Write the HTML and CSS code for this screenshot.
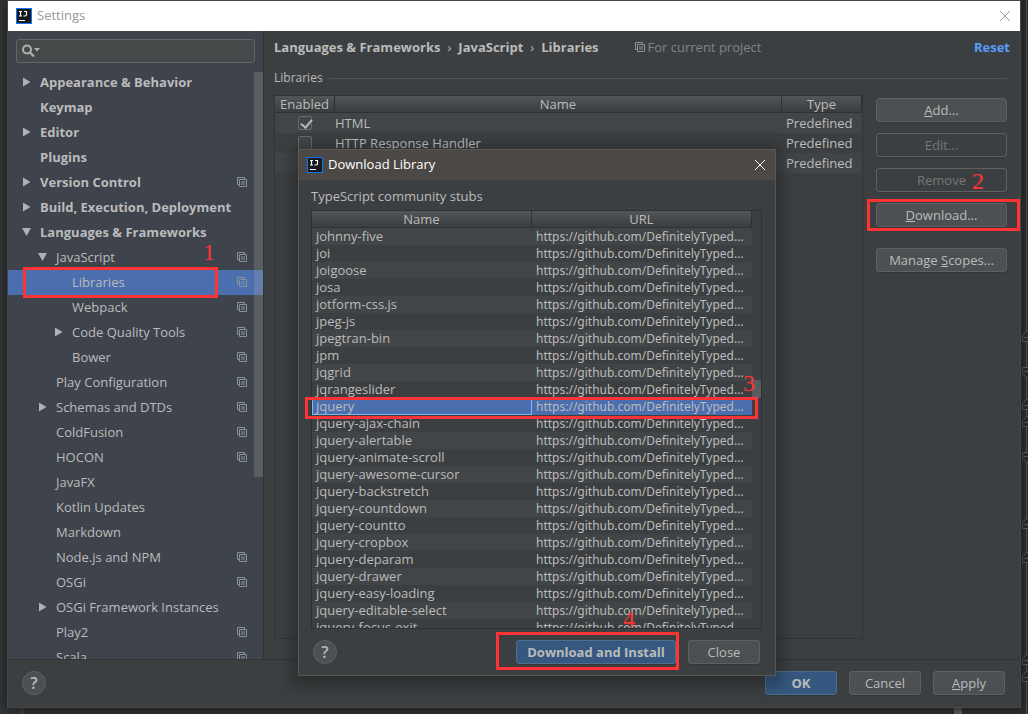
FILE: index.html
```html
<!DOCTYPE html>
<html lang="en">
<head>
<meta charset="utf-8">
<title>Settings</title>
<link rel="stylesheet" href="styles.css">
</head>
<body>
<svg class="defs" aria-hidden="true">
  <symbol id="copy" viewBox="0 0 10 10"><path d="M2 7.5H.5V.5h7V2M2.5 2.5h7v7h-7zM4 5h4M4 7h4" fill="none" stroke="currentColor"/></symbol>
  <symbol id="right" viewBox="0 0 9 10"><path d="M1 0.5 8.500 5 1 9.500z" fill="#afb1b3"/></symbol>
  <symbol id="down" viewBox="0 0 9 10"><path d="M0 1h9L4.500 9z" fill="#afb1b3"/></symbol>
  <symbol id="logo" viewBox="0 0 16 16"><path d="M0 0h16v16H0z" fill="#0f75f0"/><path d="M1 1h14v14H1z" fill="#17191c"/><path d="M3 3.500h3M4.500 3.500v4.500M3 8h3M8 3.500h2.500v3Q10.500 8 9 8H7.500M3 12.500h6" fill="none" stroke="#fff" stroke-width="1.200"/></symbol>
  <symbol id="cross" viewBox="0 0 12 12"><path d="m1 1 10 10M11 1 1 11" fill="none" stroke="currentColor"/></symbol>
</svg>
<div class="backdrop"><i class="gutter"></i><i class="thumb"></i><i class="stripe"></i>
  <svg class="folds" viewBox="0 0 6 714" fill="#2b2b2b" stroke="#606366">
    <path d="M6 331.500H4.500l-4 4v6H6M2 337.500h4"/><path d="M6 367.500H.5v6l4 4H6M2 371.500h4"/>
    <path d="M6 399.500H4.500l-4 4v6H6M2 405.500h4"/><path d="M6 416.500H4.500l-4 4v6H6M2 422.500h4"/>
    <path d="M6 452.500H.5v6l4 4H6M2 456.500h4"/><path d="M6 518.500H4.500l-4 4v6H6M2 524.500h4"/>
    <path d="M6 552.500H4.500l-4 4v6H6M2 558.500h4"/><path d="M6 654.500H4.500l-4 4v6H6M2 660.500h4"/>
    <path d="M6 671.500H4.500l-4 4v6H6M2 677.500h4"/>
  </svg>
</div>
<main class="window">
  <header class="titlebar">
    <svg class="logo"><use href="#logo"/></svg><span>Settings</span>
    <button class="close" aria-label="Close settings"><svg><use href="#cross"/></svg></button>
  </header>
  <div class="content">
    <aside class="sidebar">
      <label class="search">
        <svg viewBox="0 0 20 14"><circle cx="6" cy="5.500" r="4" fill="none" stroke="#afb1b3" stroke-width="2"/><path d="m9 8.500 4 4" stroke="#afb1b3" stroke-width="2.400"/><path d="M13 4h6l-3 3.500z" fill="#afb1b3"/></svg>
        <input type="text" aria-label="Search settings">
      </label>
      <div class="tree-view">
        <ul class="tree">
          <li class="top"><svg class="arrow"><use href="#right"/></svg>Appearance &amp; Behavior</li>
          <li class="top">Keymap</li>
          <li class="top"><svg class="arrow"><use href="#right"/></svg>Editor</li>
          <li class="top">Plugins</li>
          <li class="top"><svg class="arrow"><use href="#right"/></svg>Version Control<svg class="copy"><use href="#copy"/></svg></li>
          <li class="top"><svg class="arrow"><use href="#right"/></svg>Build, Execution, Deployment</li>
          <li class="top"><svg class="arrow"><use href="#down"/></svg>Languages &amp; Frameworks</li>
          <li class="mid"><svg class="arrow"><use href="#down"/></svg>JavaScript<svg class="copy"><use href="#copy"/></svg></li>
          <li class="deep selected">Libraries<svg class="copy"><use href="#copy"/></svg><span class="frame frame-tree"></span><span class="step step-one">1</span></li>
          <li class="deep">Webpack<svg class="copy"><use href="#copy"/></svg></li>
          <li class="deep"><svg class="arrow"><use href="#right"/></svg>Code Quality Tools<svg class="copy"><use href="#copy"/></svg></li>
          <li class="deep">Bower<svg class="copy"><use href="#copy"/></svg></li>
          <li class="mid">Play Configuration<svg class="copy"><use href="#copy"/></svg></li>
          <li class="mid"><svg class="arrow"><use href="#right"/></svg>Schemas and DTDs<svg class="copy"><use href="#copy"/></svg></li>
          <li class="mid">ColdFusion<svg class="copy"><use href="#copy"/></svg></li>
          <li class="mid">HOCON<svg class="copy"><use href="#copy"/></svg></li>
          <li class="mid">JavaFX</li>
          <li class="mid">Kotlin Updates</li>
          <li class="mid">Markdown</li>
          <li class="mid">Node.js and NPM<svg class="copy"><use href="#copy"/></svg></li>
          <li class="mid">OSGi<svg class="copy"><use href="#copy"/></svg></li>
          <li class="mid"><svg class="arrow"><use href="#right"/></svg>OSGi Framework Instances</li>
          <li class="mid">Play2<svg class="copy"><use href="#copy"/></svg></li>
          <li class="mid">Scala<svg class="copy"><use href="#copy"/></svg></li>
        </ul>
        <i class="tree-scroll"></i>
      </div>
    </aside>
    <section class="page">
      <div class="crumbs">
        <b>Languages &amp; Frameworks</b><span>›</span><b>JavaScript</b><span>›</span><b>Libraries</b>
        <span class="scope"><svg class="copy"><use href="#copy"/></svg>For current project</span>
        <a class="reset" href="#">Reset</a>
      </div>
      <h2 class="group">Libraries</h2>
      <div class="panel">
        <div class="libraries">
          <table class="grid">
            <colgroup><col class="col-enabled"><col><col class="col-type"></colgroup>
            <thead><tr><th>Enabled</th><th>Name</th><th>Type</th></tr></thead>
            <tbody>
              <tr><td><input type="checkbox" aria-label="HTML" checked></td><td>HTML</td><td>Predefined</td></tr>
              <tr><td><input type="checkbox" aria-label="HTTP Response Handler"></td><td>HTTP Response Handler</td><td>Predefined</td></tr>
              <tr><td></td><td></td><td>Predefined</td></tr>
            </tbody>
          </table>
        </div>
        <div class="actions">
          <button class="btn"><u>A</u>dd...</button>
          <button class="btn" disabled>Edit...</button>
          <button class="btn" disabled>Remove</button>
          <div class="target"><button class="btn"><u>D</u>ownload...</button><span class="frame frame-download"></span><span class="step step-two">2</span></div>
          <button class="btn spaced">Manage <u>S</u>copes...</button>
        </div>
      </div>
    </section>
  </div>
  <footer class="footer">
    <button class="help" aria-label="Help">?</button>
    <div class="buttons">
      <button class="btn primary">OK</button><button class="btn">Cancel</button><button class="btn"><u>A</u>pply</button>
    </div>
  </footer>
</main>
<section class="dialog" role="dialog" aria-label="Download Library">
  <header class="dialog-title">
    <svg class="logo"><use href="#logo"/></svg><span>Download Library</span>
    <button class="close" aria-label="Close dialog"><svg><use href="#cross"/></svg></button>
  </header>
  <div class="dialog-body">
    <div class="caption">TypeScript community stubs</div>
    <div class="target stubs">
      <div class="stub-list">
        <table class="grid dense">
          <thead><tr><th>Name</th><th>URL</th></tr></thead>
          <tbody>
            <tr><td>johnny-five</td><td>https://github.com/DefinitelyTyped...</td></tr>
            <tr><td>joi</td><td>https://github.com/DefinitelyTyped...</td></tr>
            <tr><td>joigoose</td><td>https://github.com/DefinitelyTyped...</td></tr>
            <tr><td>josa</td><td>https://github.com/DefinitelyTyped...</td></tr>
            <tr><td>jotform-css.js</td><td>https://github.com/DefinitelyTyped...</td></tr>
            <tr><td>jpeg-js</td><td>https://github.com/DefinitelyTyped...</td></tr>
            <tr><td>jpegtran-bin</td><td>https://github.com/DefinitelyTyped...</td></tr>
            <tr><td>jpm</td><td>https://github.com/DefinitelyTyped...</td></tr>
            <tr><td>jqgrid</td><td>https://github.com/DefinitelyTyped...</td></tr>
            <tr><td>jqrangeslider</td><td>https://github.com/DefinitelyTyped...</td></tr>
            <tr class="selected"><td>jquery</td><td>https://github.com/DefinitelyTyped...</td></tr>
            <tr><td>jquery-ajax-chain</td><td>https://github.com/DefinitelyTyped...</td></tr>
            <tr><td>jquery-alertable</td><td>https://github.com/DefinitelyTyped...</td></tr>
            <tr><td>jquery-animate-scroll</td><td>https://github.com/DefinitelyTyped...</td></tr>
            <tr><td>jquery-awesome-cursor</td><td>https://github.com/DefinitelyTyped...</td></tr>
            <tr><td>jquery-backstretch</td><td>https://github.com/DefinitelyTyped...</td></tr>
            <tr><td>jquery-countdown</td><td>https://github.com/DefinitelyTyped...</td></tr>
            <tr><td>jquery-countto</td><td>https://github.com/DefinitelyTyped...</td></tr>
            <tr><td>jquery-cropbox</td><td>https://github.com/DefinitelyTyped...</td></tr>
            <tr><td>jquery-deparam</td><td>https://github.com/DefinitelyTyped...</td></tr>
            <tr><td>jquery-drawer</td><td>https://github.com/DefinitelyTyped...</td></tr>
            <tr><td>jquery-easy-loading</td><td>https://github.com/DefinitelyTyped...</td></tr>
            <tr><td>jquery-editable-select</td><td>https://github.com/DefinitelyTyped...</td></tr>
            <tr><td>jquery-focus-exit</td><td>https://github.com/DefinitelyTyped...</td></tr>
          </tbody>
        </table>
        <i class="list-scroll"></i>
      </div>
      <span class="frame frame-row"></span><span class="step step-three">3</span>
    </div>
    <div class="dialog-footer">
      <button class="help" aria-label="Dialog help">?</button>
      <div class="buttons">
        <div class="target"><button class="btn primary wide">Download and Install</button><span class="frame frame-install"></span><span class="step step-four">4</span></div>
        <button class="btn">Close</button>
      </div>
    </div>
  </div>
</section>
</body>
</html>
```
FILE: styles.css
```css
* { box-sizing: border-box; }
body {
  margin: 0;
  height: 100vh;
  padding: 1px 8px 7px;
  position: relative;
  overflow: hidden;
  background: #2b2b2b;
  color: #bbbbbb;
  font: 13px/18px "Open Sans", "Noto Sans", sans-serif;
}
button, input { font: inherit; color: inherit; }
.defs { position: absolute; width: 0; height: 0; }
.backdrop { position: absolute; inset: 0; }
.backdrop i { position: absolute; }
.gutter { left: 0; top: 0; bottom: 0; width: 23px; background: #313335; border-right: 1px solid #555555; }
.thumb { right: 66px; bottom: 0; width: 8px; height: 8px; background: #595b5d; }
.stripe { right: 1px; top: 0; bottom: 0; width: 1px; background: #555555; }
.folds { position: absolute; right: 0; top: 0; width: 6px; height: 714px; }

.window {
  position: relative;
  height: 100%;
  display: flex;
  flex-direction: column;
  background: #3c3f41;
  box-shadow: 0 0 0 1px #454749, 0 0 8px 2px #202020;
}
.titlebar, .dialog-title { display: flex; align-items: center; flex: none; height: 30px; padding: 0 9px 0 8px; gap: 5px; }
.titlebar span, .dialog-title span { padding-bottom: 2px; }
.titlebar { background: #ffffff; color: #999999; }
.logo { width: 16px; height: 16px; }
.close { margin-left: auto; padding: 0; border: 0; background: none; display: flex; }
.close svg { width: 12px; height: 12px; }

.content { flex: 1; min-height: 0; display: flex; }
.sidebar { width: 256px; flex: none; display: flex; flex-direction: column; background: #3e434c; border-right: 1px solid #333537; padding-top: 8px; }
.search { display: flex; align-items: center; height: 24px; flex: none; margin: 0 8px 7px; padding-left: 4px; background: #45494a; border: 1px solid #646464; border-radius: 3px; }
.search svg { width: 20px; height: 14px; flex: none; }
.search input { flex: 1; min-width: 0; border: 0; background: none; outline: 0; }
.tree-view { flex: 1; min-height: 0; position: relative; overflow: hidden; }
.tree { list-style: none; margin: 0; padding: 0; }
.tree li { position: relative; display: flex; align-items: center; height: 25px; padding: 0 16px 1px 0; white-space: nowrap; }
.tree li.top { padding-left: 32px; font-weight: bold; }
.tree li.mid { padding-left: 48px; }
.tree li.deep { padding-left: 64px; }
.arrow { width: 9px; height: 10px; margin-left: -18px; margin-right: 9px; flex: none; }
.copy { width: 10px; height: 10px; flex: none; color: #87939a; }
.tree .copy { margin-left: auto; }
.selected { background: #4b6eaf; }
.tree-scroll { position: absolute; right: 0; top: 2px; width: 9px; height: 405px; background: rgba(166, 166, 166, 0.28); }

.page { flex: 1; min-width: 0; display: flex; flex-direction: column; padding: 7px 13px 20px 10px; }
.crumbs { display: flex; align-items: center; flex: none; }
.crumbs > span { margin: 0 7px; }
.crumbs .scope { display: flex; align-items: center; gap: 3px; margin-left: 36px; color: #808486; }
.reset { margin-left: auto; margin-right: -3px; color: #589df6; font-weight: bold; text-decoration: none; }
.group { display: flex; align-items: center; gap: 6px; margin: 13px 0 8px; font-size: 12px; font-weight: normal; }
.group::after { content: ""; flex: 1; height: 1px; background: #515456; }
.panel { flex: 1; min-height: 0; display: flex; gap: 13px; }
.libraries { flex: 1; min-width: 0; border: 1px solid #323536; }
.grid { width: 100%; border-collapse: separate; border-spacing: 0; table-layout: fixed; }
.col-enabled { width: 60px; }
.col-type { width: 80px; }
.grid th { height: 17px; padding: 0; line-height: 16px; font-weight: normal; text-align: center; background: linear-gradient(#525658, #3a3d3f); border-bottom: 1px solid #2f3233; border-right: 1px solid #2f3233; }
.grid td { height: 20px; padding: 0; line-height: 20px; white-space: nowrap; overflow: hidden; }
.grid td:last-child { padding-left: 4px; }
.grid tbody tr:nth-child(odd) { background: #414547; }
.libraries td:first-child { text-align: center; }
input[type="checkbox"] { display: block; appearance: none; width: 14px; height: 14px; margin: 0 auto; border: 1px solid #6b6b6b; border-radius: 2px; background: #43474a; }
input[type="checkbox"]:checked::after { content: ""; display: block; width: 5px; height: 9px; margin: 0 0 0 4px; border: solid #bbbbbb; border-width: 0 2px 2px 0; transform: rotate(40deg); }

.actions { width: 131px; flex: none; display: flex; flex-direction: column; gap: 11px; padding-top: 3px; }
.btn { display: block; min-width: 72px; height: 24px; padding: 0 10px; line-height: 20px; white-space: nowrap; background: #4c5052; border: 1px solid #5e6060; border-radius: 3px; box-shadow: 0 1px 1px #353739; }
.btn:disabled { background: none; color: #777777; }
.actions .btn { width: 100%; }
.spaced { margin-top: 10px; }
.btn.primary { background: #365880; border-color: #4c708c; font-weight: bold; }
.target { position: relative; }

.footer { flex: none; height: 48px; display: flex; align-items: center; justify-content: space-between; padding: 0 15px 1px 14px; border-top: 1px solid #323536; }
.help { width: 24px; height: 24px; padding: 0; border: 1px solid #5e6060; border-radius: 50%; background: #4c5052; font-size: 16px; line-height: 20px; font-weight: 600; }
.buttons { display: flex; gap: 12px; }

.dialog { position: absolute; left: 298px; top: 149px; width: 478px; background: #3c3f41; border: 1px solid #5b5753; box-shadow: 0 4px 14px 6px rgba(0, 0, 0, 0.28); }
.dialog-title { background: #4b4845; color: #ffffff; }
.dialog-body { padding: 7px 13px 11px 12px; }
.caption { margin-bottom: 5px; }
.stub-list { position: relative; height: 419px; overflow: hidden; border: 1px solid #2f3233; padding-right: 9px; }
.dense td { height: 17px; line-height: 17px; padding: 0 0 0 4px; }
.dense td:last-child { font-family: "Noto Sans", sans-serif; font-size: 12px; }
.dense .selected { background: #4b6eaf !important; }
.dense .selected td:first-child { outline: 1px solid #7fb5f5; outline-offset: -1px; }
.list-scroll { position: absolute; right: 0; top: 169px; width: 9px; height: 18px; background: #595c5e; }
.dialog-footer { display: flex; align-items: center; justify-content: space-between; padding: 11px 2px 0; }
.wide { width: 160px; }

.frame { position: absolute; border: 3px solid #ff3333; pointer-events: none; }
.frame-tree { left: 15px; right: 45px; top: -3px; bottom: -3px; }
.frame-download { inset: -4px -13px -4px -9px; }
.frame-row { left: -6px; right: 4px; top: 187px; height: 22px; }
.frame-install { inset: -8px -3px -6px -20px; }
.step { position: absolute; color: #ff3333; font: 24px/24px "Liberation Serif", serif; }
.step-one { left: 195px; top: -30px; }
.step-two { left: 96px; top: -34px; }
.step-three { right: 7px; top: 161px; }
.step-four { left: 107px; top: -33px; }
```
